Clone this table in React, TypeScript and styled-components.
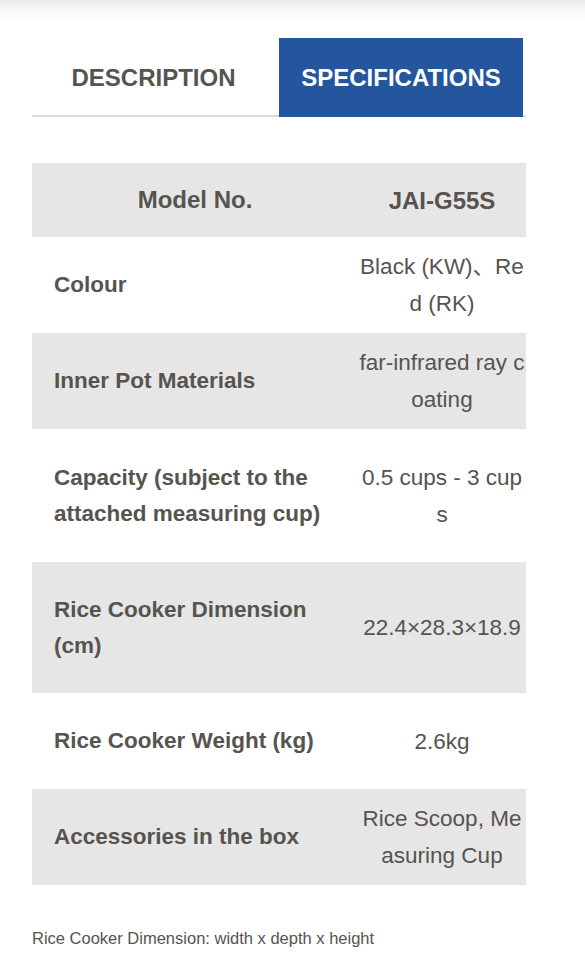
import React, { useState } from "react";
import styled, { createGlobalStyle } from "styled-components";

const GlobalStyle = createGlobalStyle`
  html, body {
    margin: 0;
    padding: 0;
    background: #fff;
  }
  body {
    font-family: "Liberation Sans", Arial, "Noto Sans CJK SC", sans-serif;
    color: #57534f;
  }
`;

const TopShade = styled.div`
  height: 22px;
  background: linear-gradient(to bottom, #e9e9e9 0%, #f7f7f7 45%, #ffffff 100%);
`;

const Wrapper = styled.div`
  width: 494px;
  margin: 16px 0 0 32px;
`;

const Tabs = styled.div`
  display: flex;
  border-bottom: 2px solid #dcdcdc;
  height: 77px;
  padding-right: 3px;
`;

const Tab = styled.div<{ $active?: boolean }>`
  flex: ${(p) => (p.$active ? "0 0 244px" : "0 0 247px")};
  display: flex;
  align-items: center;
  justify-content: center;
  font-size: 24px;
  font-weight: 700;
  text-transform: uppercase;
  background: ${(p) => (p.$active ? "#24569e" : "transparent")};
  color: ${(p) => (p.$active ? "#ffffff" : "#57534f")};
  cursor: pointer;
  margin-bottom: -2px;
`;

const DescLabel = styled.span`
  margin-left: -4px;
`;

const Table = styled.div`
  margin-top: 46px;
  display: flex;
  flex-direction: column;
`;

const Row = styled.div<{ $shade?: boolean; $h: number }>`
  display: grid;
  grid-template-columns: 326px 1fr;
  min-height: ${(p) => p.$h}px;
  background: ${(p) => (p.$shade ? "#e6e6e6" : "#ffffff")};
`;

const Label = styled.div<{ $head?: boolean }>`
  display: flex;
  align-items: center;
  justify-content: ${(p) => (p.$head ? "center" : "flex-start")};
  padding: 0 22px;
  font-size: ${(p) => (p.$head ? "24px" : "22.5px")};
  font-weight: 700;
  line-height: 36px;
`;

const Value = styled.div<{ $head?: boolean }>`
  display: flex;
  flex-direction: column;
  align-items: center;
  justify-content: center;
  text-align: center;
  font-size: ${(p) => (p.$head ? "24px" : "22.5px")};
  font-weight: ${(p) => (p.$head ? 700 : 400)};
  line-height: 37px;
  white-space: nowrap;
`;

const Note = styled.p`
  margin: 44px 0 0;
  font-size: 16.5px;
  color: #57534f;
`;

type Spec = { label: string[]; value: string[]; h: number };

const specs: Spec[] = [
  { label: ["Colour"], value: ["Black (KW)、Re", "d (RK)"], h: 96 },
  { label: ["Inner Pot Materials"], value: ["far-infrared ray c", "oating"], h: 96 },
  {
    label: ["Capacity (subject to the", "attached measuring cup)"],
    value: ["0.5 cups - 3 cup", "s"],
    h: 133,
  },
  { label: ["Rice Cooker Dimension", "(cm)"], value: ["22.4×28.3×18.9"], h: 131 },
  { label: ["Rice Cooker Weight (kg)"], value: ["2.6kg"], h: 96 },
  { label: ["Accessories in the box"], value: ["Rice Scoop, Me", "asuring Cup"], h: 96 },
];

const renderLines = (lines: string[]) =>
  lines.map((line, i) => (
    <React.Fragment key={i}>
      {i > 0 && <br />}
      {line}
    </React.Fragment>
  ));

const App = () => {
  const [tab, setTab] = useState("specifications");
  return (
    <>
      <GlobalStyle />
      <TopShade />
      <Wrapper>
        <Tabs>
          <Tab $active={tab === "description"} onClick={() => setTab("description")}>
            <DescLabel>Description</DescLabel>
          </Tab>
          <Tab $active={tab === "specifications"} onClick={() => setTab("specifications")}>
            Specifications
          </Tab>
        </Tabs>
        <Table>
          <Row $shade $h={74}>
            <Label $head>Model No.</Label>
            <Value $head>JAI-G55S</Value>
          </Row>
          {specs.map((spec, i) => (
            <Row key={spec.label[0]} $shade={i % 2 === 1} $h={spec.h}>
              <Label>
                <div>{renderLines(spec.label)}</div>
              </Label>
              <Value>
                <div>{renderLines(spec.value)}</div>
              </Value>
            </Row>
          ))}
        </Table>
        <Note>Rice Cooker Dimension: width x depth x height</Note>
      </Wrapper>
    </>
  );
};

export default App;
